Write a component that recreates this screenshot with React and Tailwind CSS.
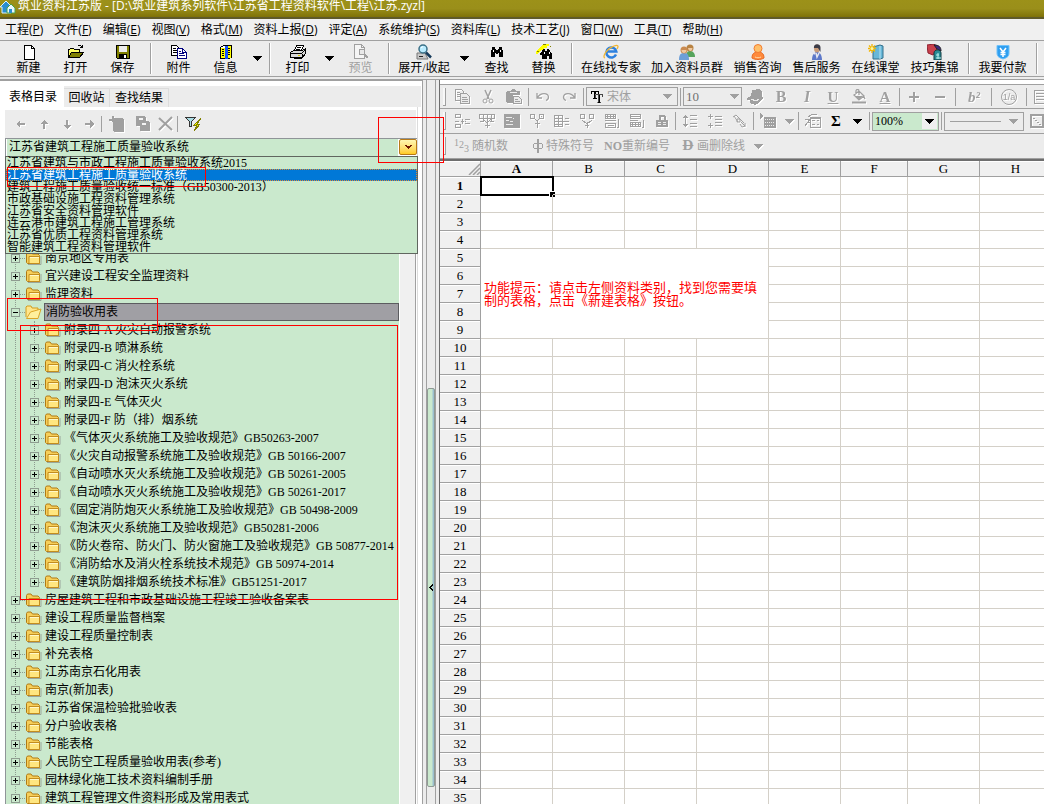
import { useState } from "react";
import clsx from "clsx";

const SONG = "font-['Liberation_Serif','Noto_Sans_CJK_SC',serif]";
const HEI = "font-['Open_Sans','Noto_Sans_CJK_SC',sans-serif]";

function Icon({ children, className = "h-4 w-4", box = "0 0 16 16", crisp = true }) {
  return (
    <svg
      className={clsx("shrink-0", className)}
      viewBox={box}
      fill="none"
      stroke="currentColor"
      shapeRendering={crisp ? "crispEdges" : "auto"}
      aria-hidden="true"
    >
      {children}
    </svg>
  );
}

/* ---------- main toolbar icons ---------- */

const icons = {
  create: (
    <Icon>
      <path d="M3.5 1.5h7l3 3v11h-10z" fill="#fff" />
      <path d="M10.5 1.5v3h3" />
    </Icon>
  ),
  open: (
    <Icon>
      <path d="M.5 13.5v-8h1l1-1h3l1 1h5v3" fill="#ffff66" stroke="#000" />
      <path d="M.5 13.5l3-5h12l-4 5z" fill="#808000" />
      <path d="M9.5 2.5l1-1h2l2 2M14.5 1v3M12 3.5h3" />
    </Icon>
  ),
  save: (
    <Icon>
      <path d="M1.5 1.5h13v13h-12l-1-1z" fill="#808000" />
      <path d="M4 2h8v6H4z" fill="#ececec" stroke="none" />
      <path d="M4 10h8v4H4z" fill="#000" stroke="none" />
      <path d="M9 11h2v3H9z" fill="#fff" stroke="none" />
    </Icon>
  ),
  attach: (
    <Icon>
      <path d="M.5 1.5h5l3 3v7h-8z" fill="#fff" />
      <path d="M2 4.5h3M2 6.5h4M2 8.5h4" />
      <path d="M6.5 4.5h5l4 4v6h-9z" fill="#fff" stroke="#000080" />
      <path d="M11.5 4.5v4h4M8 7.5h2M8 9.5h5M8 11.5h6" stroke="#000080" />
    </Icon>
  ),
  info: (
    <Icon>
      <path d="M2.5 3.5l3-2h8v12h-2v1h-9z" fill="#fff" />
      <path d="M3 4h4v10H3zM10 2h3v12h-3z" fill="#ffff00" stroke="none" />
      <path d="M7 2h3v13H7z" fill="#1553ff" stroke="none" />
      <path d="M4 5.5h2M4 7.5h2M4 9.5h2M4 11.5h2M10 4.5h2M10 6.5h2M10 8.5h2M10 10.5h2" />
    </Icon>
  ),
  print: (
    <Icon>
      <path d="M4.5 6.5l2-5h7l-2 5z" fill="#fff" />
      <path d="M7 3.5h4M6 5.5h4" />
      <path d="M.5 8.5l3-2h9l3-2v5l-3 4h-12z" fill="#d8d8d8" />
      <path d="M.5 9.5h11l3-3M12.5 9.5v4M3.5 14.5h8l3-4" />
      <path d="M8 11.5h2" stroke="#d8c800" />
    </Icon>
  ),
  preview: (
    <Icon>
      <path d="M1.5.5h7l3 3v11h-10z" fill="#f5f5f5" />
      <path d="M8.5.5v3h3" />
      <circle cx="9" cy="8" r="3" fill="#e8e8e8" />
      <path d="M11 10l4 4" strokeWidth="2" />
    </Icon>
  ),
  expand: (
    <Icon crisp={false}>
      <path d="M1 9h8l3 6H1z" fill="#c9c9c9" stroke="#777" />
      <path d="M3 12.500h4" stroke="#222" />
      <circle cx="7" cy="5" r="4" fill="#b9ecff" stroke="#3b7087" strokeWidth="1.500" />
      <path d="M5 4l2-1.500" stroke="#fff" />
      <path d="M10 8.500l5 5" stroke="#163a5a" strokeWidth="2.500" />
    </Icon>
  ),
  find: (
    <Icon>
      <path
        d="M3 3h3v2h1v1h2V5h1V3h3v2l1 2v6h-4V9H9v1H7V9H6v4H2V7l1-2z"
        fill="#000"
        stroke="none"
      />
      <path d="M4 6h1v2H4zM11 6h1v2h-1z" fill="#fff" stroke="none" />
    </Icon>
  ),
  replace: (
    <Icon>
      <path d="M12 0h1v2h-2v2H8v2H5l-3 3v1H0V8l3-4 4-3z" fill="#ffff00" stroke="none" />
      <path d="M7 .5h3M1 7.500h2M14 2.500h1" stroke="#808000" />
      <path d="M7 5h2v2h2V5h2l3 5v5h-3v-3h-2v3H6v-4H4V9l2-1z" fill="#000" stroke="none" />
      <path d="M8 8h1v2H8zM13 8h1v2h-1z" fill="#fff" stroke="none" />
    </Icon>
  ),
  expert: (
    <Icon crisp={false}>
      <path d="M13 10.500a5 5 0 1 1 .3-3H4" stroke="#2d80df" strokeWidth="2.500" />
      <path d="M2 14C-1 13 3 5 11 2c4-1.500 5 0 3 3" stroke="#f2b632" strokeWidth="1.300" />
    </Icon>
  ),
  group: (
    <Icon crisp={false}>
      <path d="M7 13c0-5 2-6 4-6s5 1 5 6z" fill="#56a45c" stroke="none" />
      <circle cx="11" cy="4" r="3.500" fill="#b88343" stroke="none" />
      <path d="M0 16c0-6 2-7 5-7s5 1 5 7z" fill="#6d9fd8" stroke="none" />
      <circle cx="5" cy="6" r="3.500" fill="#ca8b50" stroke="none" />
      <path d="M2.500 6h5c0 4-5 4-5 0M9 4h4.500c0 4-4 4-4.500 0" fill="#f0c9a0" stroke="none" />
    </Icon>
  ),
  sales: (
    <Icon crisp={false}>
      <path d="M2 14c0-5 3-6 6-6s6 1 6 6c-3 2-9 2-12 0z" fill="#ff8a3c" stroke="#e66b24" />
      <circle cx="8" cy="4.500" r="4" fill="#ffc06a" stroke="#f47c31" />
      <path d="M5 13c2 1 4 1 6 0" stroke="#ffd9a8" />
    </Icon>
  ),
  service: (
    <Icon crisp={false}>
      <path d="M3 16c0-6 3-8 5-8s5 2 5 8z" fill="#5d78c9" stroke="none" />
      <ellipse cx="8" cy="4.500" rx="3" ry="4" fill="#c99b79" stroke="none" />
      <path d="M5 4c-1-5 7-5 6.500 0v4L9 4z" fill="#3c3c48" stroke="none" />
      <path d="M1 7l5 3M7 9l1 4 2-4" stroke="#e6e6ee" strokeWidth="1.500" />
    </Icon>
  ),
  classroom: (
    <Icon crisp={false}>
      <path d="M5 3l7-2 3 1v12l-3 1H5z" fill="#68b7d8" stroke="#34708c" />
      <path d="M12 2v13" stroke="#b9e3f2" />
      <path d="M4 0v9M0 4.500h8M1 1.500l6 6M7 1.500l-6 6" stroke="#f3b500" strokeWidth="1.300" />
      <circle cx="4" cy="4.500" r="1.500" fill="#fff59a" stroke="none" />
    </Icon>
  ),
  skill: (
    <Icon crisp={false}>
      <path d="M0 1l7-1 4 3-5 8-5-2z" fill="#c9404c" stroke="#8d2030" />
      <path d="M7 1c5 0 7 2 7 6l-4-2z" fill="#3b2a80" stroke="#222" />
      <path d="M7 16V9c0-4 7-4 7 0v7z" fill="#2a8c95" stroke="#123a40" />
      <path d="M9 11h3M9 14h5M11 9v6" stroke="#b8f0ee" />
    </Icon>
  ),
  pay: (
    <Icon crisp={false}>
      <path d="M2 1.500h12V9c0 4-3 5-6 6-3-1-6-2-6-6z" fill="#2f9ff0" stroke="#6fc2fb" />
      <path d="M5 4l3 4 3-4M8 8v5M5.500 8.500h5M5.500 10.500h5" stroke="#fff" strokeWidth="1.500" />
    </Icon>
  ),
};

const toolbar = [
  { label: "新建", icon: "create", width: "w-[47px]" },
  { label: "打开", icon: "open", width: "w-[47px]" },
  { label: "保存", icon: "save", width: "w-[47px]" },
  { sep: true },
  { label: "附件", icon: "attach", width: "w-[47px]" },
  { label: "信息", icon: "info", width: "w-[47px]" },
  { arrow: "信息选项" },
  { sep: true },
  { label: "打印", icon: "print", width: "w-[47px]" },
  { arrow: "打印选项" },
  { label: "预览", icon: "preview", width: "w-[47px]", disabled: true },
  { sep: true },
  { label: "展开/收起", icon: "expand", width: "w-[62px]" },
  { arrow: "展开选项", wide: true },
  { label: "查找", icon: "find", width: "w-[47px]" },
  { label: "替换", icon: "replace", width: "w-[47px]" },
  { sep: true },
  { label: "在线找专家", icon: "expert", width: "w-[70px]" },
  { label: "加入资料员群", icon: "group", width: "w-[82px]" },
  { label: "销售咨询", icon: "sales", width: "w-[59px]" },
  { label: "售后服务", icon: "service", width: "w-[59px]" },
  { label: "在线课堂", icon: "classroom", width: "w-[59px]" },
  { label: "技巧集锦", icon: "skill", width: "w-[59px]" },
  { sep: true },
  { label: "我要付款", icon: "pay", width: "w-[59px]" },
  { sep: true },
];

const menus = [
  ["工程", "P"],
  ["文件", "F"],
  ["编辑", "E"],
  ["视图", "V"],
  ["格式", "M"],
  ["资料上报", "D"],
  ["评定", "A"],
  ["系统维护", "S"],
  ["资料库", "L"],
  ["技术工艺", "J"],
  ["窗口", "W"],
  ["工具", "T"],
  ["帮助", "H"],
];

const libraries = [
  "江苏省建筑与市政工程施工质量验收系统2015",
  "江苏省建筑工程施工质量验收系统",
  "建筑工程施工质量验收统一标准（GB50300-2013）",
  "市政基础设施工程资料管理系统",
  "江苏省安全资料管理软件",
  "连云港市建筑工程施工管理系统",
  "江苏省优质工程资料管理系统",
  "智能建筑工程资料管理软件",
];

const tree = [
  { name: "南京地区专用表" },
  { name: "宜兴建设工程安全监理资料" },
  { name: "监理资料" },
  {
    name: "消防验收用表",
    children: [
      "附录四-A 火灾自动报警系统",
      "附录四-B 喷淋系统",
      "附录四-C 消火栓系统",
      "附录四-D 泡沫灭火系统",
      "附录四-E 气体灭火",
      "附录四-F 防（排）烟系统",
      "《气体灭火系统施工及验收规范》GB50263-2007",
      "《火灾自动报警系统施工及验收规范》GB 50166-2007",
      "《自动喷水灭火系统施工及验收规范》GB 50261-2005",
      "《自动喷水灭火系统施工及验收规范》GB 50261-2017",
      "《固定消防炮灭火系统施工及验收规范》GB 50498-2009",
      "《泡沫灭火系统施工及验收规范》GB50281-2006",
      "《防火卷帘、防火门、防火窗施工及验收规范》GB 50877-2014",
      "《消防给水及消火栓系统技术规范》GB 50974-2014",
      "《建筑防烟排烟系统技术标准》GB51251-2017",
    ],
  },
  { name: "房屋建筑工程和市政基础设施工程竣工验收备案表" },
  { name: "建设工程质量监督档案" },
  { name: "建设工程质量控制表" },
  { name: "补充表格" },
  { name: "江苏南京石化用表" },
  { name: "南京(新加表)" },
  { name: "江苏省保温检验批验收表" },
  { name: "分户验收表格" },
  { name: "节能表格" },
  { name: "人民防空工程质量验收用表(参考)" },
  { name: "园林绿化施工技术资料编制手册" },
  { name: "建筑工程管理文件资料形成及常用表式" },
];

const columns = [
  { name: "A", width: "w-[72px]" },
  { name: "B", width: "w-[72px]" },
  { name: "C", width: "w-[72px]" },
  { name: "D", width: "w-[72px]" },
  { name: "E", width: "w-[72px]" },
  { name: "F", width: "w-[67px]" },
  { name: "G", width: "w-[72px]" },
  { name: "H", width: "w-[72px]" },
];

function Caret({ className = "text-black" }) {
  return (
    <Icon box="0 0 9 5" className={clsx("h-[5px] w-[9px]", className)}>
      <path d="M0 0h9v1H8v1H7v1H6v1H5v1H4V4H3V3H2V2H1V1H0z" fill="currentColor" stroke="none" />
    </Icon>
  );
}

function TitleBar() {
  return (
    <header
      className={clsx(
        "flex h-[19px] shrink-0 items-start overflow-hidden border-b-2 border-[#5f5a2a] bg-linear-to-b from-[#9c9119] via-[#9a8f1a] to-[#7f7208] text-xs leading-3 text-white",
        HEI
      )}
    >
      <Icon className="mr-0.5 h-[14px] w-4" box="0 2 16 14" crisp={false}>
        <path d="M0 9l6-6 5 5v7H2V9z" fill="#2b8ed0" stroke="#d9f1ff" />
        <path d="M7 10l4-4 4 4v5H7z" fill="#e9f7ff" stroke="#49a24a" />
        <path d="M9 11h3v4H9z" fill="#2b8ed0" stroke="none" />
      </Icon>
      <h1 className="whitespace-nowrap">筑业资料江苏版 - [D:\筑业建筑系列软件\江苏省工程资料软件\工程\江苏.zyzl]</h1>
    </header>
  );
}

function MenuBar() {
  return (
    <nav className={clsx("flex h-[21px] shrink-0 items-center gap-[11px] bg-[#f0f0f0] pl-[5px] text-xs leading-4", HEI)}>
      {menus.map(([name, key]) => (
        <button key={name} type="button" className="whitespace-nowrap">
          {name}(<u>{key}</u>)
        </button>
      ))}
    </nav>
  );
}

function MainToolbar() {
  return (
    <div className={clsx("flex h-[37px] shrink-0 items-stretch border-y border-[#a0a0a0] bg-[#ececec] pl-[5px] text-xs", SONG)}>
      {toolbar.map((item, i) => {
        if (item.sep) {
          return (
            <div key={i} className="my-0.5 flex w-[9px] shrink-0 justify-center">
              <div className="w-0.5 border-l border-r border-l-[#a0a0a0] border-r-white" />
            </div>
          );
        }
        if (item.arrow) {
          return (
            <button
              key={i}
              type="button"
              aria-label={item.arrow}
              className={clsx("flex shrink-0 items-center justify-center", item.wide ? "w-[18px]" : "w-4")}
            >
              <Caret />
            </button>
          );
        }
        return (
          <button
            key={i}
            type="button"
            disabled={item.disabled}
            className={clsx(
              "flex shrink-0 flex-col items-center gap-px pt-[3px] leading-[14px] whitespace-nowrap",
              item.width,
              item.disabled && "text-[#a0a0a0]"
            )}
          >
            {icons[item.icon]}
            {item.label}
          </button>
        );
      })}
    </div>
  );
}

/* ---------- left panel ---------- */

function Folder({ open }) {
  return (
    <Icon className="h-4 w-[17px]" box="0 0 17 16" crisp={false}>
      {open ? (
        <>
          <path d="M1 13V3l1-1h4l1 2h6v3" fill="#ffe68a" stroke="#d39b1f" />
          <path d="M1.500 14.500l4-6.500 10.500-3-3 9.500z" fill="#fff09d" stroke="#dca526" />
        </>
      ) : (
        <>
          <path d="M3 14.500h13V6" stroke="#9aa69b" />
          <path d="M1.500 12.500v-9l1-1.500H6l1.500 2H13l1.500 1.500v8h-12z" fill="#f6cf5a" stroke="#b07a14" />
          <path d="M4 6.500h10.500v7H4z" fill="#ffe680" stroke="#c38d1e" />
          <path d="M5 7.500h9" stroke="#fff8c8" />
        </>
      )}
    </Icon>
  );
}

function TreeRow({ name, open, nested }) {
  return (
    <div className={clsx("flex h-[18px] items-center", nested ? "pl-6" : "pl-[5px]")}>
      <button type="button" aria-label={open ? "收起" : "展开"} className="relative shrink-0 bg-[#cae9cd]">
        <Icon box="0 0 9 9" className="h-[9px] w-[9px]">
          <path d="M.5.5h8v8h-8z" stroke="#8e9c90" />
          <path d={open ? "M2 4.500h5" : "M2 4.500h5M4.500 2v5"} stroke="#000" />
        </Icon>
      </button>
      <span className="w-[5px] shrink-0 border-t border-dotted border-[#8e9c90]" />
      <Folder open={open} />
      <span
        className={clsx(
          "ml-0.5 h-[18px] leading-4 whitespace-nowrap",
          open ? "flex-1 border border-[#5c5c60] bg-[#a09fa4] pl-px" : "border border-transparent"
        )}
      >
        {name}
      </span>
    </div>
  );
}

const panelTools = [
  { label: "左移", box: "0 0 9 8", size: "h-2 w-[9px]", d: "M0 4l4-4v3h5v2H4v3z" },
  { label: "上移", box: "0 0 8 9", size: "h-[9px] w-2", d: "M4 0l4 4H5v5H3V4H0z" },
  { label: "下移", box: "0 0 8 9", size: "h-[9px] w-2", d: "M4 9l4-4H5V0H3v5H0z" },
  { label: "右移", box: "0 0 9 8", size: "h-2 w-[9px]", d: "M9 4L5 0v3H0v2h5v3z" },
];

function LeftPanel() {
  const [library, setLibrary] = useState(libraries[1]);
  const grayTool = "flex w-[23px] shrink-0 items-center justify-center text-[#a0a0a0] drop-shadow-[1px_1px_0_white]";

  return (
    <aside className={clsx("flex w-[423px] shrink-0 flex-col border-t border-r border-[#a0a0a0] bg-white pl-0.5 text-xs", SONG)}>
      <div role="tablist" className="mt-[5px] mr-px flex h-[21px] shrink-0 items-end bg-[#ececec]">
        <button type="button" role="tab" aria-selected="true" className="h-[21px] w-[62px] bg-white leading-5">
          表格目录
        </button>
        <button type="button" role="tab" aria-selected="false" className="h-[19px] w-[46px] border-t border-r border-[#dcdcdc]">
          回收站
        </button>
        <button type="button" role="tab" aria-selected="false" className="h-[19px] w-[59px] border-t border-r border-[#dcdcdc]">
          查找结果
        </button>
      </div>

      <div className="mr-1 flex min-h-0 flex-1 flex-col border-r border-[#dcdcdc] pt-[3px] pl-[3px]">
        <div className="mr-px flex h-7 shrink-0 items-center bg-[#ececec] pl-1">
          {panelTools.map(({ label, box, size, d }) => (
            <button key={label} type="button" aria-label={label} className={grayTool}>
              <Icon box={box} className={size}>
                <path d={d} fill="currentColor" stroke="none" />
              </Icon>
            </button>
          ))}
          <div className="h-4 w-px bg-[#a0a0a0]" />
          <button type="button" aria-label="新建表格" className="flex w-[29px] justify-center text-[#a0a0a0] drop-shadow-[1px_1px_0_white]">
            <Icon>
              <path d="M3 0h2v2h8l2 2v12H5l-1-2V6H3V5H0V3h3z" fill="currentColor" stroke="none" />
            </Icon>
          </button>
          <button type="button" aria-label="复制表格" className={grayTool}>
            <Icon>
              <path d="M1 0h8l2 2v3h2l2 2v8H5v-5H1z" fill="currentColor" stroke="none" />
              <path d="M4 2h4v2H4zM7 7h4v2H7z" fill="#f4f4f4" stroke="none" />
            </Icon>
          </button>
          <button type="button" aria-label="删除表格" className={grayTool}>
            <Icon crisp={false}>
              <path d="M1 2l13 12M14 1L1 14" strokeWidth="2" />
            </Icon>
          </button>
          <div className="h-4 w-px bg-[#a0a0a0]" />
          <button type="button" aria-label="筛选" className="flex w-[29px] justify-center">
            <Icon>
              <path d="M.5 1.500h10l-4 4v5h-2v-5z" fill="#a8dce4" stroke="#333" />
              <path d="M15 3l-6 6h3l-3 6 6-7h-3l3-4z" fill="#ffff00" stroke="#808000" />
            </Icon>
          </button>
        </div>

        <div className="relative flex min-h-0 flex-1 flex-col">
          <div className="flex h-[18px] shrink-0 border-t border-l border-[#8f9498] pl-px">
            <label htmlFor="library" className="sr-only">资料库</label>
            <select
              id="library"
              value={library}
              onChange={(e) => setLibrary(e.target.value)}
              className="h-[17px] min-w-0 flex-1 appearance-none bg-[#cae9cd] px-0.5 leading-[17px] outline-none"
            >
              {libraries.map((name) => (
                <option key={name}>{name}</option>
              ))}
            </select>
            <button
              type="button"
              aria-label="展开列表"
              className="ml-px flex h-4 w-[18px] items-center justify-center rounded-xs border border-[#b87a18] bg-linear-to-b from-[#fff7b0] to-[#ffcc1c]"
            >
              <Icon box="0 0 7 4" className="h-1 w-[7px] text-[#701800]">
                <path d="M0 0h2v1h3V0h2v1H6v1H5v1H4v1H3V3H2V2H1V1H0z" fill="currentColor" stroke="none" />
              </Icon>
            </button>
          </div>

          <ul
            role="listbox"
            aria-label="资料库列表"
            className="absolute top-[18px] -right-px left-0 z-10 border border-[#60665f] bg-[#cae9cd] leading-3"
          >
            {libraries.map((name) => (
              <li
                key={name}
                role="option"
                aria-selected={name === library}
                className={clsx(
                  "h-3 pl-px whitespace-nowrap",
                  name === library && "bg-[#0078d7] text-white outline outline-dotted -outline-offset-1 outline-[#e08a30]"
                )}
              >
                {name}
              </li>
            ))}
          </ul>

          <div className="flex min-h-0 flex-1 border-l border-[#8f9498]">
            <div className="min-w-0 flex-1 overflow-hidden bg-[#cae9cd] pt-[93px]">
              <ul className="relative">
                <li aria-hidden="true" className="absolute inset-y-0 left-[9px] border-l border-dotted border-[#8e9c90]" />
                {tree.map((node) => (
                  <li key={node.name}>
                    <TreeRow name={node.name} open={Boolean(node.children)} />
                    {node.children && (
                      <ul className="relative">
                        <li aria-hidden="true" className="absolute top-0 bottom-2 left-7 border-l border-dotted border-[#8e9c90]" />
                        {node.children.map((name) => (
                          <li key={name}>
                            <TreeRow name={name} nested />
                          </li>
                        ))}
                      </ul>
                    )}
                  </li>
                ))}
              </ul>
            </div>
            <div className="ml-px w-4 shrink-0 border-r border-[#a0a0a0] bg-[#f0f0f0]" />
            <div className="w-px shrink-0" />
          </div>
        </div>
      </div>
    </aside>
  );
}

function Splitter() {
  return (
    <div className="ml-[3px] flex w-[10px] shrink-0 flex-col border-x border-[#a0a0a0] bg-[#ececec]">
      <div className="flex-[308]" />
      <button
        type="button"
        aria-label="收起左侧面板"
        className="flex flex-[398] items-center justify-center rounded-xs border border-[#8f9a94] bg-linear-to-r from-[#cae9cd] from-60% to-[#8fb4cf]"
      >
        <Icon box="0 0 4 7" className="h-[7px] w-1 text-black">
          <path d="M3 0h1v2H3v1H2v1h1v1h1v2H3V6H2V5H1V4H0V3h1V2h1V1h1z" fill="currentColor" stroke="none" />
        </Icon>
      </button>
      <div className="flex-[17]" />
    </div>
  );
}

/* ---------- format toolbars ---------- */

function Sep({ className = "mx-px" }) {
  return <div className={clsx("h-[18px] w-px shrink-0 bg-[#a0a0a0]", className)} />;
}

function Tool({ label, width = "w-[26px]", dark, children }) {
  return (
    <button
      type="button"
      aria-label={label}
      className={clsx(
        "flex h-5 shrink-0 items-center justify-center",
        width,
        dark ? "text-black" : "text-[#a0a0a0] drop-shadow-[1px_1px_0_white]"
      )}
    >
      {children}
    </button>
  );
}

function Gripper() {
  return <div className="mr-[3px] ml-[3px] h-[18px] w-[3px] shrink-0 border-r border-b border-[#a0a0a0] bg-[#f8f8f8]" />;
}

const solid = { fill: "currentColor", stroke: "none" };

const rowTools = [
  ["插入行", "M1.500 1.500h5v3h-5zM1.500 11.500h5v3h-5zM1 8.500h4M7 8.500h3M10.500 6.500h5M10.500 10.500h5M8.500 6v5M11 8.500h1"],
  ["插入列", "M.5 1.500h15v4H.5zM4.500 1v8M8.500 1v14M12.500 1v8M1 8.500h4M11 8.500h4M5 7l3 3 4-4M6 12.500h5"],
  ["单元格", null],
  ["合并", "M1.500 1.500h4v4h-4zM10.500 1.500h4v4h-4zM6 6l2 2 2-2M8 8v7M5.500 10.500h5M12 3.500h1"],
  ["拆分行", "M.5 2.500h8v11h-8zM1 5.500h7M1 8.500h7M1 11.500h7M4.500 3v10M9 8.500h6M11 5.500h4M11 11.500h4"],
  ["拆分列", "M1.500 1.500h4v4h-4zM10.500 1.500h4v4h-4zM3 7l5 4 5-4M8 9v6M6 12.500h4"],
  ["行向下", "M1.500 1.500h10v4h-10zM1 3.500h11M1 7.500h11M1.500 10.500h10v4h-10zM3.500 2v4M6.500 2v4M9.500 2v4M4 12.500h6M14.500 6v8h-2"],
  ["行向上", "M1.500 1.500h10v4h-10zM1 3.500h11M1 7.500h8M1.500 9.500h10v4h-10zM1 11.500h10M3.500 10v4M6.500 10v4M9.500 10v4M14.500 7v7h-2"],
];

function FormatBars() {
  const bar = "flex items-center border-b border-[#a0a0a0] overflow-hidden";
  const field = "flex h-[19px] shrink-0 items-center border border-[#a0a0a0]";
  return (
    <div className={clsx("shrink-0 border-t border-[#a0a0a0] bg-[#ececec] text-xs text-[#a0a0a0]", SONG)}>
      <div className={clsx(bar, "h-6")}>
        <Gripper />
        <Tool label="复制">
          <Icon>
            <path d="M1.500.500h6l2 2v9h-8zM3 3.500h3M3 5.500h5M3 7.500h5" />
            <path d="M6.500 4.500h6l3 3v7h-9z" fill="#ececec" />
            <path d="M8 8.500h5M8 10.500h6M8 12.500h6" />
          </Icon>
        </Tool>
        <Tool label="剪切">
          <Icon crisp={false}>
            <path d="M5 1l4 9M11 1L7 10" strokeWidth="1.500" />
            <circle cx="5" cy="12" r="2" />
            <circle cx="11" cy="12" r="2" />
          </Icon>
        </Tool>
        <Tool label="粘贴">
          <Icon>
            <path d="M0 3l1-1h4l1-2h3l1 2h4v4H7v8H1l-1-1z" {...solid} />
            <path d="M4 3.500h7" stroke="#ececec" />
            <path d="M7.500 7.500h5l3 3v4h-8z" fill="#ececec" />
            <path d="M9 10.500h3M9 12.500h5" />
          </Icon>
        </Tool>
        <Sep />
        <Tool label="撤销">
          <Icon crisp={false}>
            <path d="M2 4v5h5M2.500 8.500C6 3 13 4 13.500 8c0 2-1 3-2.500 3.500" strokeWidth="1.300" />
          </Icon>
        </Tool>
        <Tool label="重做">
          <Icon crisp={false}>
            <path d="M14 4v5H9M13.500 8.500C10 3 3 4 2.500 8c0 2 1 3 2.500 3.500" strokeWidth="1.300" />
          </Icon>
        </Tool>
        <Sep />
        <div className={clsx(field, "ml-px w-[92px] pl-1")}>
          <Icon className="h-3 w-3 text-black" box="0 0 12 12">
            <path d="M0 0h8v3H7V1H5v6h1v1H2V7h1V1H1v2H0z" {...solid} />
            <path d="M4 3h8v3h-1V4H9v7h1v1H6v-1h1V4H5v2H4z" fill="currentColor" stroke="#ececec" strokeWidth=".3" />
          </Icon>
          <select aria-label="字体" className="w-[60px] appearance-none pl-1 outline-none">
            <option>宋体</option>
          </select>
          <Caret className="text-[#a0a0a0]" />
        </div>
        <Sep className="mx-0.5" />
        <div className={clsx(field, "w-[59px] pl-0.5")}>
          <select aria-label="字号" className="w-11 appearance-none text-[13px] text-[#707070] outline-none">
            <option>10</option>
          </select>
          <Caret className="text-[#a0a0a0]" />
        </div>
        <Tool label="清除格式">
          <Icon>
            <path d="M5 1l7-1 3 2v5l1 2-4 5-4 2-5-2v-3H0V9l4-2z" {...solid} />
            <path d="M4 10l5 2 3-2" stroke="#ececec" />
          </Icon>
        </Tool>
        <Tool label="加粗"><b className="text-base leading-4">B</b></Tool>
        <Tool label="倾斜"><i className="text-base leading-4 font-bold">I</i></Tool>
        <Tool label="下划线"><u className="text-[15px] leading-4 font-bold">U</u></Tool>
        <Tool label="填充颜色">
          <Icon crisp={false}>
            <path d="M3 6l5-4 5 5-5 4zM5 5V2c0-2 3-2 3 0v4M12 6l2 4" strokeWidth="1.300" />
            <path d="M4 7l8 0-4 3.500z" {...solid} />
            <path d="M1 13.500h14" strokeWidth="2" />
          </Icon>
        </Tool>
        <Tool label="字体颜色"><u className="text-[15px] leading-4 font-bold">A</u></Tool>
        <Sep />
        <Tool label="增大">
          <Icon><path d="M3 8h10M8 3v10" strokeWidth="2" /></Icon>
        </Tool>
        <Tool label="减小">
          <Icon><path d="M3 8h10" strokeWidth="2" /></Icon>
        </Tool>
        <Sep className="mx-0.5" />
        <Tool label="上标" width="w-8"><i className="text-[15px] leading-4 font-bold">b²</i></Tool>
        <Sep />
        <Tool label="分数" width="w-8">
          <span className="flex h-4 w-4 items-center justify-center rounded-full border border-[#a0a0a0] font-['Liberation_Sans',sans-serif] text-[9px] leading-3">
            1/a
          </span>
        </Tool>
        <Sep />
        <Tool label="段落">
          <Icon><path d="M1.500 1.500h13v13h-13zM3 4.500h10M3 7.500h10M3 10.500h10" /></Icon>
        </Tool>
      </div>

      <div className={clsx(bar, "h-[25px]")}>
        <Gripper />
        {rowTools.map(([label, d]) => (
          <Tool key={label} label={label} width="w-[25px]">
            {d ? (
              <Icon><path d={d} /></Icon>
            ) : (
              <Icon>
                <path d="M0 1h16v14H0z" {...solid} />
                <path d="M2 4.500h6M2 7.500h3M6 8.500h3M2 11.500h7M9 5.500h1" stroke="#ececec" />
              </Icon>
            )}
          </Tool>
        ))}
        <Tool label="锁定" width="w-[25px]">
          <Icon>
            <path d="M5.500 7V3.500l1-1h3l1 1V7" strokeWidth="2" />
            <path d="M2 7h12v7H2z" {...solid} />
            <path d="M4 9.500h3M9 9.500h3M4 11.500h3M9 11.500h3" stroke="#ececec" />
          </Icon>
        </Tool>
        <Sep />
        <Tool label="增大行距" width="w-[25px]">
          <Icon><path d="M3.500 2v12M1 4.500h5M1 11.500h5M2 3.500h3M2 12.500h3M8 2.500h7M8 6.500h7M8 10.500h7M8 13.500h7" /></Icon>
        </Tool>
        <Tool label="减小行距" width="w-[25px]">
          <Icon><path d="M3.500 1v5M3.500 10v5M1 3.500h5M1 12.500h5M8 3.500h7M8 6.500h7M8 9.500h7M8 12.500h7" /></Icon>
        </Tool>
        <Tool label="旋转文字" width="w-[25px]">
          <Icon crisp={false}><path d="M1 4l3-2 8 8M2 3l4 6M5 6h3v3H5zM9 9l4 4-3 1-2-3M13 10v4" /></Icon>
        </Tool>
        <Sep />
        <Tool label="图片">
          <Icon>
            <path d="M4 4h12v11H4z" fill="currentColor" stroke="none" />
            <path d="M5 6.500h10M5 9.500h10M5 12.500h10" stroke="#ececec" strokeDasharray="1 1" />
            <path d="M0 0l4 3-4 3z" {...solid} />
          </Icon>
        </Tool>
        <Tool label="图片选项" width="w-4"><Caret className="text-[#a0a0a0]" /></Tool>
        <Sep />
        <Tool label="公式">
          <Icon><path d="M5.500 4.500h10v10h-10zM7 7.500h3M12 7.500h2M7 11.500h3M12 11.500h2M0 6h4M2 9h3M0 13l5-7M3 4l5-3h4M6 5.500h9" /></Icon>
        </Tool>
        <Tool label="求和" width="w-5" dark><b className="text-[15px] leading-4">Σ</b></Tool>
        <Tool label="求和选项" width="w-[22px]" dark><Caret /></Tool>
        <Sep />
        <div className="ml-px flex h-[19px] w-[67px] shrink-0 items-center border border-[#a0a0a0] bg-[#cae9cd] pr-px pl-0.5 text-black">
          <select aria-label="缩放" className="min-w-0 flex-1 appearance-none outline-none">
            <option>100%</option>
          </select>
          <span className="flex h-4 w-[15px] items-center justify-center bg-[#f0f0f0]"><Caret /></span>
        </div>
        <Sep className="mx-0.5" />
        <button type="button" aria-label="线型" className={clsx(field, "w-[80px] gap-2 px-[5px]")}>
          <span className="h-px flex-1 bg-[#a0a0a0]" />
          <Caret className="text-[#a0a0a0]" />
        </button>
        <Tool label="边框">
          <Icon><path d="M2 2h12v12H2z" strokeWidth="2" /><path d="M4 5h2M6 7h2M8 9h2M10 11h2" /></Icon>
        </Tool>
      </div>

      <div className={clsx(bar, "h-[25px] text-shadow-[1px_1px_0_white]")}>
        <Gripper />
        <button type="button" className="flex w-[82px] shrink-0 items-center pl-[5px] whitespace-nowrap">
          <span className="flex w-[18px] text-[10px] leading-3">
            <span className="pb-1.5">1</span>
            <span className="pt-0.5">2</span>
            <span className="pt-1.5">3</span>
          </span>
          随机数
        </button>
        <button type="button" className="flex w-[73px] shrink-0 items-center gap-px whitespace-nowrap">
          <Icon className="h-3.5 w-3.5" box="0 0 14 14">
            <path d="M7 0v14" strokeWidth="2" />
            <path d="M3.500 4.500h7l1 1v3l-1 1h-7l-1-1v-3z" />
          </Icon>
          特殊符号
        </button>
        <button type="button" className="flex w-[77px] shrink-0 items-center whitespace-nowrap">
          <b className="w-[18px] text-center">NO</b>重新编号
        </button>
        <button type="button" className="flex shrink-0 items-center gap-0.5 whitespace-nowrap">
          <s className="w-[14px] text-center text-[15px] font-bold">D</s>画删除线
        </button>
        <Tool label="删除线选项"><Caret className="text-[#a0a0a0]" /></Tool>
      </div>
    </div>
  );
}

/* ---------- sheet ---------- */

function Sheet() {
  const rows = Array.from({ length: 35 }, (_, i) => i + 1);
  const head = "border-r border-b border-[#a0a0a0] bg-[#f0f0f0] p-0 shadow-[inset_0_1px_0_white]";

  return (
    <div className={clsx("min-h-0 flex-1 overflow-hidden border-t-2 border-[#6e6e6e] bg-white", SONG)}>
      <table className="w-[612px] table-fixed border-separate border-spacing-0 text-[13px] leading-[15px]">
        <thead>
          <tr className="h-[15px]">
            <th className={clsx(head, "w-[41px]")}>
              <Icon className="ml-auto h-3 w-3 text-[#a0a0a0]" box="0 0 12 12" crisp={false}>
                <path d="M1 12L12 1M5 12l7-7M9 12l3-3" strokeWidth="1.500" />
              </Icon>
            </th>
            {columns.map(({ name, width }) => (
              <th key={name} scope="col" className={clsx(head, width, name === "A" ? "font-bold" : "font-normal")}>
                {name}
              </th>
            ))}
          </tr>
        </thead>
        <tbody>
          {rows.map((row) => (
            <tr key={row} className="h-[18px]">
              <th scope="row" className={clsx(head, row === 1 ? "font-bold" : "font-normal")}>
                {row}
              </th>
              {row === 5 && (
                <td
                  colSpan={4}
                  rowSpan={5}
                  className="border-r border-b border-[#d4d0c8] p-0 pl-[3px] align-middle leading-[13px] text-[#f00]"
                >
                  功能提示：请点击左侧资料类别，找到您需要填制的表格，点击《新建表格》按钮。
                </td>
              )}
              {columns.slice(row >= 5 && row <= 9 ? 4 : 0).map(({ name }) => (
                <td key={name} className="relative border-r border-b border-[#d4d0c8] p-0">
                  {row === 1 && name === "A" && (
                    <span className="absolute -inset-px -right-0.5 -bottom-0.5 border-2 border-black">
                      <span className="absolute -right-[3px] -bottom-[3px] h-1.5 w-1.5 border-t border-l border-white bg-black" />
                    </span>
                  )}
                </td>
              ))}
            </tr>
          ))}
        </tbody>
      </table>
    </div>
  );
}

/* red frames that mark the steps on the screen */
function Marks() {
  const frame = "pointer-events-none absolute z-20 border border-[#f00]";
  return (
    <>
      <div className={clsx(frame, "top-[117px] left-[378px] h-[46px] w-[66px]")} />
      <div className={clsx(frame, "top-[167px] left-[7px] h-5 w-[199px]")} />
      <div className={clsx(frame, "top-[298px] left-[7px] h-[33px] w-[151px]")} />
      <div className={clsx(frame, "top-[325px] left-5 h-[275px] w-[378px]")} />
    </>
  );
}

export default function App() {
  return (
    <div className="relative flex h-screen w-full flex-col overflow-hidden bg-[#ececec] text-black">
      <TitleBar />
      <MenuBar />
      <MainToolbar />
      <div className="mt-0.5 h-px shrink-0 bg-[#a0a0a0]" />
      <div className="flex min-h-0 flex-1">
        <LeftPanel />
        <Splitter />
        <main className="ml-[3px] flex min-w-0 flex-1 flex-col border-l border-[#6e6e6e] bg-white pt-1">
          <FormatBars />
          <Sheet />
        </main>
      </div>
      <Marks />
    </div>
  );
}
